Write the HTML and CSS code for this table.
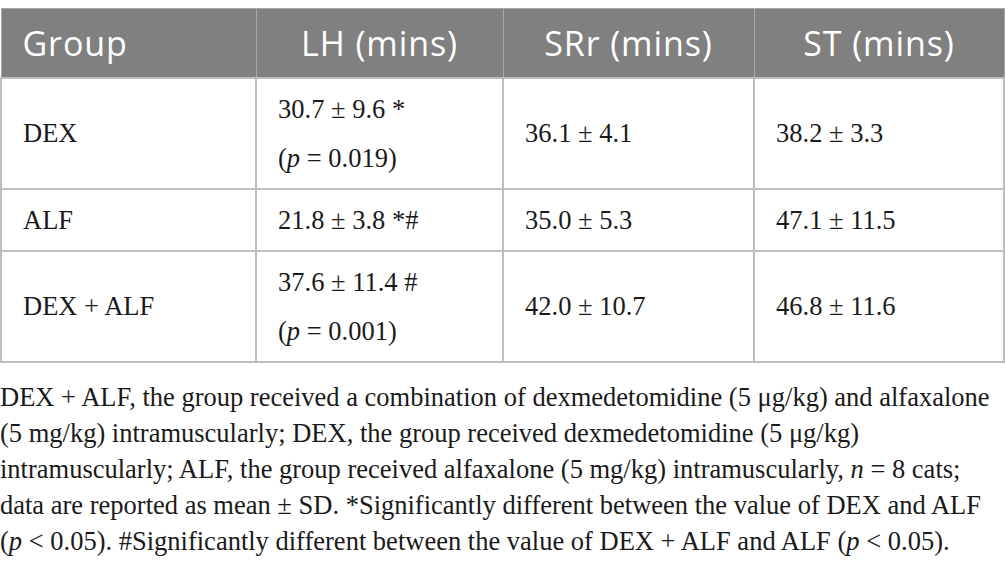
FILE: index.html
```html
<!DOCTYPE html>
<html>
<head>
<meta charset="utf-8">
<link rel="stylesheet" href="styles.css">
</head>
<body>
<div class="page">
  <table class="data">
    <colgroup>
      <col class="c1"><col class="c2"><col class="c3"><col class="c4">
    </colgroup>
    <thead>
      <tr>
        <th class="left">Group</th>
        <th>LH (mins)</th>
        <th>SRr (mins)</th>
        <th>ST (mins)</th>
      </tr>
    </thead>
    <tbody>
      <tr>
        <td>DEX</td>
        <td>30.7 ± 9.6 *<br>(<i>p</i> = 0.019)</td>
        <td>36.1 ± 4.1</td>
        <td>38.2 ± 3.3</td>
      </tr>
      <tr>
        <td>ALF</td>
        <td>21.8 ± 3.8 *#</td>
        <td>35.0 ± 5.3</td>
        <td>47.1 ± 11.5</td>
      </tr>
      <tr>
        <td>DEX + ALF</td>
        <td>37.6 ± 11.4 #<br>(<i>p</i> = 0.001)</td>
        <td>42.0 ± 10.7</td>
        <td>46.8 ± 11.6</td>
      </tr>
    </tbody>
  </table>
  <p class="note">DEX + ALF, the group received a combination of dexmedetomidine (5 μg/kg) and alfaxalone<br>(5 mg/kg) intramuscularly; DEX, the group received dexmedetomidine (5 μg/kg)<br>intramuscularly; ALF, the group received alfaxalone (5 mg/kg) intramuscularly, <i>n</i> = 8 cats;<br>data are reported as mean ± SD. *Significantly different between the value of DEX and ALF<br>(<i>p</i> &lt; 0.05). #Significantly different between the value of DEX + ALF and ALF (<i>p</i> &lt; 0.05).</p>
</div>
</body>
</html>
```

FILE: styles.css
```css
html, body {
  margin: 0;
  padding: 0;
  background: #ffffff;
}

.page {
  padding-top: 8px;
  width: 1005px;
}

.data {
  border-collapse: collapse;
  table-layout: fixed;
  width: 1003px;
  font-family: "Liberation Serif", "Times New Roman", serif;
  font-size: 26.5px;
  color: #1a1a1a;
}

.c1 { width: 255px; }
.c2 { width: 247px; }
.c3 { width: 251px; }
.c4 { width: 250px; }

.data th {
  background: #808080;
  color: #ffffff;
  font-family: "Open Sans", "Liberation Sans", sans-serif;
  font-weight: 400;
  font-size: 34px;
  letter-spacing: 0.9px;
  height: 68px;
  padding: 0 21px;
  text-align: center;
  border: 1px solid #a8a8a8;
  vertical-align: middle;
}

.data th.left {
  text-align: left;
}

.data td {
  border: 2px solid #bdbdbd;
  padding: 5.5px 21px;
  line-height: 49px;
  vertical-align: middle;
  text-align: left;
}

.data td i {
  font-style: italic;
}

.note {
  margin: 16px 0 0 0;
  font-family: "Liberation Serif", "Times New Roman", serif;
  font-size: 26.5px;
  line-height: 36px;
  color: #1a1a1a;
  white-space: nowrap;
}
```
